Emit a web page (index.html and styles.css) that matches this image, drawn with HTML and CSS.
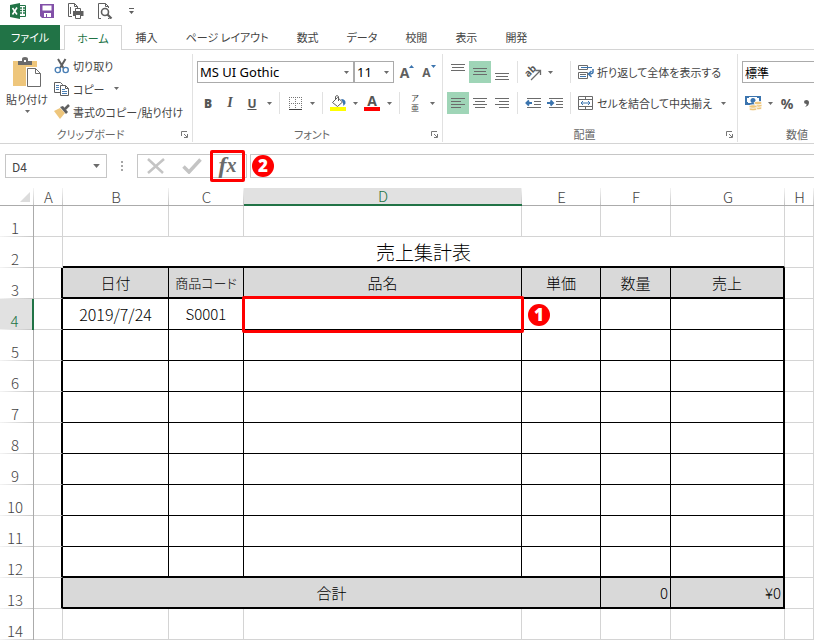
FILE: index.html
```
<!DOCTYPE html>
<html lang="ja">
<head>
  <meta charset="UTF-8">
  <meta name="viewport" content="width=device-width, initial-scale=1.0">
  <title>売上集計表</title>
  <link rel="stylesheet" href="styles.css">
</head>
<body>

  <!-- shared icons -->
  <svg class="defs" width="0" height="0" aria-hidden="true">
    <symbol id="arrow" viewBox="0 0 5 3"><path d="M0 0h5L2.500 3z" fill="#6b6b6b"/></symbol>
    <symbol id="launcher" viewBox="0 0 7 7"><path d="M.5 5V.5H6M3 3l3 3M6.500 3v3.500H3" fill="none" stroke="#777"/></symbol>
  </svg>

  <div class="quick-access">
    <svg width="16" height="16" viewBox="0 0 16 16" role="img" aria-label="Excel">
      <path d="M9 2.500h6.500v11H9" fill="#fff" stroke="#217346"/>
      <path d="M10 5h2M13 5h2M10 7.500h2M13 7.500h2M10 10h2M13 10h2" stroke="#217346" stroke-width="1.500"/>
      <path d="M0 2L10 0v16L0 14z" fill="#217346"/>
      <path d="M2.500 5l4.500 6.500M7 4.500L2.500 11.500" stroke="#fff" stroke-width="1.600"/>
    </svg>
    <button type="button" aria-label="上書き保存">
      <svg width="14" height="14" viewBox="0 0 14 14"><path d="M0 0h14v14H2L0 12z" fill="#8250a8"/><path d="M2.500 1.500h9v5h-9zM4 9h7v4H7v-3H6v3H4z" fill="#fff"/></svg>
    </button>
    <button type="button" aria-label="クイック印刷">
      <svg width="16" height="16" viewBox="0 0 16 16" fill="none" stroke="#5f5f5f"><path d="M4 13.500H.5V.5h6l3 3V5M6.500.5v3h3M2.500 4v7"/><path d="M7.500 8V5.500h5V8" /><path d="M5 8h10.500v5H5z" fill="#5f5f5f" stroke="none"/><path d="M7.500 11.500h5v4h-5z" fill="#fff"/></svg>
    </button>
    <button type="button" aria-label="印刷プレビュー">
      <svg width="16" height="16" viewBox="0 0 16 16" fill="none" stroke="#5f5f5f"><path d="M3 15.500H.5V.5h7l3 3V5M7.500.5v3h3M10 15.500h1.500"/><circle cx="7" cy="9" r="3.500" stroke-width="1.600"/><path d="M9.500 11.500l4 4" stroke-width="2.200"/></svg>
    </button>
    <button type="button" aria-label="クイック アクセス ツール バーのカスタマイズ">
      <svg width="7" height="6" viewBox="0 0 7 6"><path d="M1 0h5v1H1zM1 3h5L3.500 6z" fill="#5f5f5f"/></svg>
    </button>
  </div>

  <nav class="tabs">
    <a href="#" class="tab file">ファイル</a>
    <a href="#" class="tab active">ホーム</a>
    <a href="#" class="tab">挿入</a>
    <a href="#" class="tab">ページ レイアウト</a>
    <a href="#" class="tab">数式</a>
    <a href="#" class="tab">データ</a>
    <a href="#" class="tab">校閲</a>
    <a href="#" class="tab">表示</a>
    <a href="#" class="tab">開発</a>
  </nav>

  <div class="ribbon">
    <section class="group clipboard">
      <div class="clip-tools">
        <button type="button" class="paste">
          <svg width="30" height="31" viewBox="0 0 30 31">
            <path d="M1 4h24v25H1z" fill="#eec67c"/>
            <path d="M6 8V4h4V2q0-2 3-2t3 2v2h4v4z" fill="#6b6b6b"/><path d="M12 3h2v2h-2z" fill="#fff"/>
            <path d="M14 10h16v21H14z" fill="#fff"/>
            <path d="M15.500 11.500h8l5 5v13h-13zM23.500 11.500v5h5" fill="#fff" stroke="#6b6b6b"/>
          </svg>
          <span>貼り付け</span>
          <svg class="arrow"><use href="#arrow"/></svg>
        </button>
        <div class="clip-list">
          <button type="button" class="text-tool">
            <svg width="16" height="16" viewBox="0 0 16 16" fill="none"><path d="M4 1l5.500 9M11.500 1L6 10" stroke="#5f5f5f" stroke-width="2"/><circle cx="3.800" cy="12" r="2.600" stroke="#4a7fb5" stroke-width="1.400"/><circle cx="11.700" cy="12" r="2.600" stroke="#4a7fb5" stroke-width="1.400"/></svg>
            切り取り
          </button>
          <button type="button" class="text-tool">
            <svg width="16" height="16" viewBox="0 0 16 16" fill="#fff" stroke="#5f5f5f"><path d="M.5 1.500h6l2 2v8h-8z"/><path d="M6.500 4.500h5l3 3v7h-8zM11.500 4.500v3h3"/><path d="M2 4.500h3M2 6.500h3M2 8.500h3M8 8.500h3M8 10.500h5M8 12.500h5" stroke="#4a7fb5"/></svg>
            コピー
            <svg class="arrow"><use href="#arrow"/></svg>
          </button>
          <button type="button" class="text-tool">
            <svg width="16" height="16" viewBox="0 0 16 16"><path d="M0 7l6-3 5 5-5 6z" fill="#eec67c"/><path d="M6 3l3-1 5 6-2 2z" fill="#5f5f5f"/><path d="M11 5l4-4" stroke="#5f5f5f" stroke-width="2.500"/></svg>
            書式のコピー/貼り付け
          </button>
        </div>
      </div>
      <div class="group-label"><span>クリップボード</span><button type="button" aria-label="クリップボードの詳細"><svg width="7" height="7"><use href="#launcher"/></svg></button></div>
    </section>

    <section class="group font">
      <div class="rows">
        <div class="row">
          <label class="combo font-name"><select aria-label="フォント名"><option>MS UI Gothic</option></select><svg class="arrow"><use href="#arrow"/></svg></label>
          <label class="combo font-size"><select aria-label="フォント サイズ"><option>11</option></select><svg class="arrow"><use href="#arrow"/></svg></label>
          <button type="button" class="tool grow" aria-label="拡大"><span class="big">A</span><svg width="5" height="3" viewBox="0 0 5 3"><path d="M0 3h5L2.500 0z" fill="#3b74ae"/></svg></button>
          <button type="button" class="tool grow" aria-label="縮小"><span>A</span><svg width="5" height="3" viewBox="0 0 5 3"><path d="M0 0h5L2.500 3z" fill="#3b74ae"/></svg></button>
        </div>
        <div class="row">
          <button type="button" class="tool letter"><b>B</b></button>
          <button type="button" class="tool letter italic"><i>I</i></button>
          <button type="button" class="tool letter"><u>U</u></button>
          <button type="button" class="drop" aria-label="下線の種類"><svg class="arrow"><use href="#arrow"/></svg></button>
          <span class="sep"></span>
          <button type="button" class="tool" aria-label="罫線"><svg width="13" height="13" viewBox="0 0 13 13"><path d="M0 .5h13M0 6.500h13M.5 0v13M6.500 0v13M12.500 0v13" stroke="#777" stroke-dasharray="1 1"/><path d="M0 12.500h13" stroke="#444"/></svg></button>
          <button type="button" class="drop" aria-label="罫線の種類"><svg class="arrow"><use href="#arrow"/></svg></button>
          <span class="sep"></span>
          <button type="button" class="tool" aria-label="塗りつぶしの色"><svg width="16" height="16" viewBox="0 0 16 16"><path d="M0 12h16v4H0z" fill="#ff0"/><path d="M2.500 7.500l5-5 5 4.500-5 4.500z" fill="#fff" stroke="#5f5f5f"/><path d="M5.500 5V1.500q1.500-2 3 0V6" fill="none" stroke="#5f5f5f"/><path d="M11 4q5 0 4.500 4.500L13.500 11q0-4-2.500-7z" fill="#3b74ae"/></svg></button>
          <button type="button" class="drop" aria-label="塗りつぶしの色の選択"><svg class="arrow"><use href="#arrow"/></svg></button>
          <button type="button" class="tool font-color" aria-label="フォントの色"><span>A</span></button>
          <button type="button" class="drop" aria-label="フォントの色の選択"><svg class="arrow"><use href="#arrow"/></svg></button>
          <span class="sep"></span>
          <button type="button" class="tool ruby" aria-label="ふりがな"><span>ア</span><span>亜</span></button>
          <button type="button" class="drop" aria-label="ふりがなの設定"><svg class="arrow"><use href="#arrow"/></svg></button>
        </div>
      </div>
      <div class="group-label"><span>フォント</span><button type="button" aria-label="フォントの詳細"><svg width="7" height="7"><use href="#launcher"/></svg></button></div>
    </section>

    <section class="group align">
      <div class="rows">
        <div class="row">
          <div class="align-tools">
            <button type="button" class="tool" aria-label="上揃え"><svg width="14" height="16" viewBox="0 0 14 16" stroke="#6b6b6b"><path d="M0 .5h14M1 3.500h12M0 6.500h14"/></svg></button>
            <button type="button" class="tool on" aria-label="上下中央揃え"><svg width="14" height="16" viewBox="0 0 14 16" stroke="#6b6b6b"><path d="M0 4.500h14M1 7.500h12M0 10.500h14"/></svg></button>
            <button type="button" class="tool" aria-label="下揃え"><svg width="14" height="16" viewBox="0 0 14 16" stroke="#6b6b6b"><path d="M0 9.500h14M1 12.500h12M0 15.500h14"/></svg></button>
            <span class="sep"></span>
            <button type="button" class="tool" aria-label="方向"><svg width="18" height="18" viewBox="0 0 18 18"><text class="ab" x="1" y="11" transform="rotate(-45 7 9)">ab</text><path d="M7 17l9-9M11.500 7.500h5V12" fill="none" stroke="#6b6b6b" stroke-width="1.300"/></svg></button>
            <button type="button" class="drop" aria-label="方向の選択"><svg class="arrow"><use href="#arrow"/></svg></button>
          </div>
          <span class="sep"></span>
          <button type="button" class="text-tool">
            <svg width="16" height="16" viewBox="0 0 16 16" fill="none" stroke="#6b6b6b"><path d="M.5 1.500h9v4h-9zM.5 8.500h9v6h-9zM2 10.500h6"/><path d="M3 3.500h11M2 12.500h6" stroke="#3b74ae"/><path d="M15 5v3q0 2-4 2M13.500 7l-3 3 3 3" stroke="#3b74ae" stroke-width="1.500"/></svg>
            折り返して全体を表示する
          </button>
        </div>
        <div class="row">
          <div class="align-tools">
            <button type="button" class="tool on" aria-label="左揃え"><svg width="14" height="14" viewBox="0 0 14 14" stroke="#6b6b6b"><path d="M0 2.500h14M0 5.500h10M0 8.500h14M0 11.500h10"/></svg></button>
            <button type="button" class="tool" aria-label="中央揃え"><svg width="14" height="14" viewBox="0 0 14 14" stroke="#6b6b6b"><path d="M0 2.500h14M2 5.500h10M0 8.500h14M2 11.500h10"/></svg></button>
            <button type="button" class="tool" aria-label="右揃え"><svg width="14" height="14" viewBox="0 0 14 14" stroke="#6b6b6b"><path d="M0 2.500h14M4 5.500h10M0 8.500h14M4 11.500h10"/></svg></button>
            <span class="sep"></span>
            <button type="button" class="tool" aria-label="インデントを減らす"><svg width="16" height="14" viewBox="0 0 16 14" fill="none" stroke="#6b6b6b"><path d="M2 2.500h14M9 5.500h7M9 8.500h7M2 11.500h14"/><path d="M7 7H1.500M4 4.500L1.500 7 4 9.500" stroke="#3b74ae" stroke-width="2"/></svg></button>
            <button type="button" class="tool" aria-label="インデントを増やす"><svg width="16" height="14" viewBox="0 0 16 14" fill="none" stroke="#6b6b6b"><path d="M2 2.500h14M9 5.500h7M9 8.500h7M2 11.500h14"/><path d="M0 7h6M3.500 4.500L6 7 3.500 9.500" stroke="#3b74ae" stroke-width="2"/></svg></button>
          </div>
          <span class="sep"></span>
          <button type="button" class="text-tool">
            <svg width="16" height="16" viewBox="0 0 16 16" fill="none" stroke="#6b6b6b"><path d="M.5 1.500h14v13H.5zM0 4.500h15M0 11.500h15M7.500 1v3M7.500 12v3"/><path d="M3 8h9M5 6L3 8l2 2M10 6l2 2-2 2" stroke="#3b74ae"/></svg>
            セルを結合して中央揃え
            <svg class="arrow"><use href="#arrow"/></svg>
          </button>
        </div>
      </div>
      <div class="group-label"><span>配置</span><button type="button" aria-label="配置の詳細"><svg width="7" height="7"><use href="#launcher"/></svg></button></div>
    </section>

    <section class="group number">
      <div class="rows">
        <div class="row">
          <label class="combo number-format"><select aria-label="表示形式"><option>標準</option></select></label>
        </div>
        <div class="row">
          <button type="button" class="tool" aria-label="通貨表示形式"><svg width="17" height="16" viewBox="0 0 17 16"><path d="M0 1h16v9H0z" fill="#3b74ae"/><path d="M2 3h2V2h8v1h2v5H3V7H2z" fill="#fff"/><circle cx="8" cy="5.500" r="2.500" fill="#3b74ae"/><g fill="#eec67c" stroke="#fff" stroke-width=".8"><ellipse cx="13" cy="13" rx="4" ry="1.800"/><ellipse cx="13" cy="10.500" rx="4" ry="1.800"/><ellipse cx="13" cy="8" rx="4" ry="1.800"/><ellipse cx="8" cy="14" rx="4" ry="1.800"/><ellipse cx="8" cy="11.500" rx="4" ry="1.800"/></g></svg></button>
          <button type="button" class="drop" aria-label="通貨の選択"><svg class="arrow"><use href="#arrow"/></svg></button>
          <button type="button" class="tool percent">%</button>
          <button type="button" class="comma" aria-label="桁区切り"><svg width="5" height="7" viewBox="0 0 5 7"><path d="M0 2q0-2 2.500-2T5 2.500Q5 6 1 7q2-1.500 1.500-3Q0 4 0 2z" fill="#5f5f5f"/></svg></button>
        </div>
      </div>
      <div class="group-label"><span>数値</span></div>
    </section>
  </div>

  <div class="formula-bar">
    <label class="name-box"><input type="text" value="D4" aria-label="名前ボックス"><svg width="7" height="4"><use href="#arrow"/></svg></label>
    <svg class="dots" width="2" height="12" viewBox="0 0 2 12"><path d="M0 1h2v2H0zM0 5h2v2H0zM0 9h2v2H0z" fill="#a6a6a6"/></svg>
    <div class="formula-buttons">
      <button type="button" aria-label="キャンセル"><svg width="18" height="16" viewBox="0 0 18 16"><path d="M1 1l15 14M17 1L1 15" stroke="#c4c4c4" stroke-width="2.500"/></svg></button>
      <button type="button" aria-label="入力"><svg width="20" height="16" viewBox="0 0 20 16"><path d="M1.500 8.500l5.500 5.500L18.500 1.500" fill="none" stroke="#c4c4c4" stroke-width="3.500"/></svg></button>
      <button type="button" class="fx" aria-label="関数の挿入">f<small>x</small></button>
    </div>
    <input type="text" class="formula" aria-label="数式バー">
    <span class="badge badge-fx">2</span>
  </div>

  <table class="sheet">
    <colgroup>
      <col class="col-head"><col class="col-a"><col class="col-b"><col class="col-c"><col class="col-d"><col class="col-e"><col class="col-f"><col class="col-g"><col class="col-h">
    </colgroup>
    <thead>
      <tr>
        <th class="corner"><svg width="10" height="10" viewBox="0 0 10 10"><path d="M10 0v10H0z" fill="#dcdcdc"/></svg></th>
        <th>A</th><th>B</th><th>C</th><th class="current">D</th><th>E</th><th>F</th><th>G</th><th>H</th>
      </tr>
    </thead>
    <tbody>
      <tr><th>1</th><td></td><td></td><td></td><td></td><td></td><td></td><td></td><td></td></tr>
      <tr class="title-row"><th>2</th><td></td><td colspan="6" class="title">売上集計表</td><td></td></tr>
      <tr class="data head">
        <th>3</th><td></td>
        <td>日付</td><td class="code-head">商品コード</td><td>品名</td><td>単価</td><td>数量</td><td>売上</td><td></td>
      </tr>
      <tr class="data">
        <th class="current">4</th><td></td>
        <td class="date">2019/7/24</td><td>S0001</td>
        <td class="selected"><span class="marker"></span><span class="badge badge-cell">1</span></td>
        <td></td><td></td><td></td><td></td>
      </tr>
      <tr class="data"><th>5</th><td></td><td></td><td></td><td></td><td></td><td></td><td></td><td></td></tr>
      <tr class="data"><th>6</th><td></td><td></td><td></td><td></td><td></td><td></td><td></td><td></td></tr>
      <tr class="data"><th>7</th><td></td><td></td><td></td><td></td><td></td><td></td><td></td><td></td></tr>
      <tr class="data"><th>8</th><td></td><td></td><td></td><td></td><td></td><td></td><td></td><td></td></tr>
      <tr class="data"><th>9</th><td></td><td></td><td></td><td></td><td></td><td></td><td></td><td></td></tr>
      <tr class="data"><th>10</th><td></td><td></td><td></td><td></td><td></td><td></td><td></td><td></td></tr>
      <tr class="data"><th>11</th><td></td><td></td><td></td><td></td><td></td><td></td><td></td><td></td></tr>
      <tr class="data last"><th>12</th><td></td><td></td><td></td><td></td><td></td><td></td><td></td><td></td></tr>
      <tr class="data total"><th>13</th><td></td><td colspan="4">合計</td><td class="num">0</td><td class="num">¥0</td><td></td></tr>
      <tr><th>14</th><td></td><td></td><td></td><td></td><td></td><td></td><td></td><td></td></tr>
    </tbody>
  </table>

</body>
</html>
```

FILE: styles.css
```
* {
  box-sizing: border-box;
}

body {
  margin: 0;
  background: #fff;
  color: #444;
  font-family: "Noto Sans CJK JP", sans-serif;
  font-size: 11px;
  font-feature-settings: "palt";
}

button,
select,
input {
  margin: 0;
  padding: 0;
  border: 0;
  background: none;
  color: inherit;
  font: inherit;
  font-feature-settings: inherit;
}

button {
  display: flex;
  align-items: center;
  justify-content: center;
}

svg {
  display: block;
  flex: none;
}

.defs {
  position: absolute;
}

.arrow {
  width: 5px;
  height: 3px;
}

/* quick access bar */
.quick-access {
  display: flex;
  align-items: center;
  gap: 14px;
  height: 25px;
  padding: 0 10px 3px;
}

/* tabs */
.tabs {
  display: flex;
  height: 25px;
  border-bottom: 1px solid #d4d4d4;
}

.tab {
  height: 25px;
  padding: 0 14px;
  line-height: 25px;
  color: #444;
  text-decoration: none;
  white-space: nowrap;
}

.tab.file {
  margin-right: 4px;
  padding: 0 11px;
  background: #217346;
  color: #fff;
}

.tab.active {
  padding: 0 12px;
  border: 1px solid #d4d4d4;
  border-bottom: 0;
  background: #fff;
  color: #217346;
}

/* ribbon */
.ribbon {
  display: flex;
  height: 94px;
  padding: 4px 0 1px;
  overflow: hidden;
  border-bottom: 1px solid #d4d4d4;
}

.group {
  display: flex;
  flex: none;
  flex-direction: column;
  justify-content: space-between;
  border-right: 1px solid #e1e1e1;
}

.clipboard {
  width: 193px;
}

.font {
  width: 250px;
}

.align {
  width: 295px;
}

.number {
  flex: 1;
  min-width: 0;
  border-right: 0;
}

.group-label {
  display: flex;
  align-items: center;
  height: 16px;
  padding-right: 4px;
  color: #666;
  line-height: 16px;
}

.group-label span {
  flex: 1;
  text-align: center;
}

.number .group-label {
  padding: 0 0 0 48px;
}

.number .group-label span {
  text-align: left;
}

.clip-tools {
  display: flex;
  gap: 5px;
  padding-left: 5px;
}

.paste {
  flex-direction: column;
  justify-content: flex-start;
  width: 44px;
  padding-top: 3px;
  line-height: 22px;
  white-space: nowrap;
}

.clip-list .text-tool {
  height: 23px;
}

.text-tool {
  gap: 3px;
  height: 22px;
  white-space: nowrap;
}

.text-tool .arrow {
  margin-left: 6px;
}

.rows {
  display: flex;
  flex-direction: column;
  gap: 9px;
  padding: 7px 0 0 4px;
}

.row {
  display: flex;
  height: 22px;
}

.tool {
  width: 22px;
  height: 22px;
}

.tool.on {
  background: #9fd5b7;
}

.drop {
  width: 12px;
  height: 22px;
}

.sep {
  width: 1px;
  height: 22px;
  margin: 0 4px;
  background: #e1e1e1;
}

.row > .sep {
  margin: 0 7px 0 0;
}

.font .row > .sep {
  margin: 0 4px;
}

.align-tools {
  display: flex;
  width: 123px;
}

.combo {
  display: flex;
  align-items: center;
  padding: 0 4px 0 2px;
  border: 1px solid #ababab;
  color: #000;
}

.combo select {
  flex: 1;
  min-width: 0;
  appearance: none;
  outline: 0;
}

.font-name,
.font-size {
  font-family: "Noto Sans", sans-serif;
  font-size: 13px;
}

.font-name {
  width: 157px;
}

.font-size {
  width: 40px;
  margin-right: 2px;
}

.number-format {
  flex: 1;
  border-right: 0;
  font-size: 12px;
}

.grow {
  align-items: center;
  color: #5f5f5f;
  font: bold 12px "Open Sans", sans-serif;
}

.grow .big {
  font-size: 14px;
}

.grow svg {
  align-self: flex-start;
  margin-top: 4px;
}

.letter {
  color: #555;
  font: bold 12px "Open Sans", sans-serif;
}

.letter.italic {
  font-family: "Liberation Serif", serif;
  font-size: 14px;
}

.font-color span {
  width: 16px;
  height: 16px;
  border-bottom: 4px solid #f00;
  color: #555;
  font: bold 14px/12px "Open Sans", sans-serif;
}

.ruby {
  flex-direction: column;
  font-size: 8px;
  line-height: 10px;
}

.ab {
  fill: #555;
  font: bold 10px "Open Sans", sans-serif;
}

.percent {
  color: #555;
  font: bold 14px "Noto Sans", sans-serif;
}

.comma {
  width: 16px;
}

/* formula bar */
.formula-bar {
  position: relative;
  display: flex;
  align-items: center;
  height: 44px;
  padding-left: 5px;
  font-size: 12px;
}

.name-box,
.formula-buttons,
.formula {
  height: 24px;
  border: 1px solid #c6c6c6;
}

.name-box {
  display: flex;
  align-items: center;
  width: 102px;
  padding: 0 6px;
}

.name-box input {
  flex: 1;
  min-width: 0;
}

.dots {
  margin: 0 14px;
}

.formula-buttons {
  display: flex;
  width: 110px;
  align-items: center;
}

.formula-buttons button {
  width: 36px;
}

.formula-buttons .fx {
  flex: none;
  width: 35px;
  height: 32px;
  padding-bottom: 2px;
  border: 3px solid #f00;
  border-radius: 2px;
  color: #6b6b6b;
  font: italic bold 24px/24px "Liberation Serif", serif;
}

.fx small {
  font-size: 20px;
}

.formula {
  flex: 1;
  min-width: 0;
  margin-left: 3px;
  border-right: 0;
}

.badge {
  position: absolute;
  width: 22px;
  height: 22px;
  border-radius: 50%;
  background: #f00;
  color: #fff;
  font: 900 17px/22px "Noto Sans", sans-serif;
  text-align: center;
}

.badge-fx {
  top: 11px;
  left: 252px;
}

/* sheet */
.sheet {
  width: 100%;
  table-layout: fixed;
  border-spacing: 0;
  font-size: 15px;
  font-weight: 300;
  font-feature-settings: normal;
}

.col-head {
  width: 34px;
}

.col-a,
.col-h {
  width: 29px;
}

.col-b {
  width: 106px;
}

.col-c {
  width: 75px;
}

.col-e {
  width: 79px;
}

.col-f {
  width: 70px;
}

.col-g {
  width: 114px;
}

.sheet th,
.sheet td {
  padding: 0;
  font-weight: 300;
}

.sheet thead th {
  height: 18px;
  border-bottom: 1px solid #ababab;
  background: linear-gradient(#f4f4f4, #c6c6c6) right / 1px 100% no-repeat;
  line-height: 17px;
}

.sheet thead .current {
  border-bottom: 2px solid #217346;
  background-color: #e1e1e1;
  color: #217346;
  line-height: 16px;
}

.corner svg {
  margin-left: 20px;
}

.sheet tbody th {
  height: 31px;
  padding: 0 3px 1px 0;
  border-right: 1px solid #ababab;
  background: linear-gradient(to right, #f4f4f4, #c6c6c6) bottom / 100% 1px no-repeat;
  line-height: 16px;
  vertical-align: bottom;
}

.sheet tbody .current {
  border-right: 2px solid #217346;
  background-color: #e1e1e1;
  color: #217346;
}

.sheet td {
  height: 31px;
  border-right: 1px solid #d4d4d4;
  border-bottom: 1px solid #d4d4d4;
  color: #000;
  line-height: 22px;
  text-align: center;
}

.sheet .title {
  font-size: 19px;
}

.sheet .title,
.head td:not(:nth-child(2)):not(:last-child),
.last td:not(:nth-child(2)):not(:last-child),
.total td:not(:nth-child(2)):not(:last-child) {
  border-bottom: 2px solid #000;
}

.data td:not(:nth-child(2)):not(:last-child) {
  border-right-color: #000;
  border-bottom-color: #000;
}

.sheet .data td:nth-child(2),
.sheet .data td:nth-last-child(2) {
  border-right: 2px solid #000;
}

.head td:not(:nth-child(2)):not(:last-child),
.total td:not(:nth-child(2)):not(:last-child) {
  background: #d9d9d9;
}

.sheet .code-head {
  font-size: 13px;
  font-feature-settings: "palt";
}

.sheet .date {
  font-size: 16px;
}

.sheet .num {
  padding-right: 2px;
  text-align: right;
}

.selected {
  position: relative;
}

.marker {
  position: absolute;
  top: -3px;
  right: -3px;
  bottom: -4px;
  left: -2px;
  border: 3px solid #f00;
  border-radius: 2px;
}

.badge-cell {
  top: 5px;
  right: -29px;
}
```
